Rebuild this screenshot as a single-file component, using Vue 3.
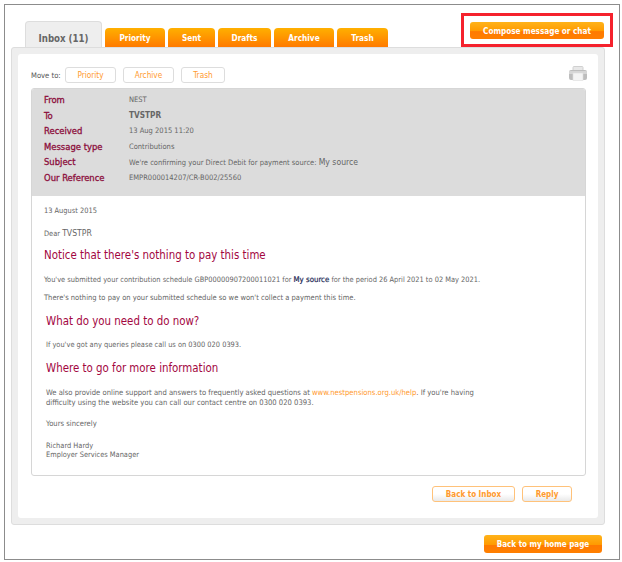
<script setup>
const tabs = ['Priority', 'Sent', 'Drafts', 'Archive', 'Trash']
const moves = ['Priority', 'Archive', 'Trash']
const meta = [
  { label: 'From', value: 'NEST' },
  { label: 'To', value: 'TVSTPR', big: true },
  { label: 'Received', value: '13 Aug 2015 11:20' },
  { label: 'Message type', value: 'Contributions' },
  { label: 'Subject', value: "We're confirming your Direct Debit for payment source: ", extra: 'My source' },
  { label: 'Our Reference', value: 'EMPR000014207/CR-B002/25560' }
]
</script>

<template>
  <div class="frame">
    <div class="top">
      <nav class="tabs">
        <div class="tab active">Inbox (11)</div>
        <div v-for="t in tabs" :key="t" class="tab" :class="'t-' + t.toLowerCase()">{{ t }}</div>
      </nav>
      <div class="highlight">
        <button class="solid compose">Compose message or chat</button>
      </div>
    </div>

    <section class="panel">
      <div class="card">
        <div class="toolbar">
          <span class="move-label">Move to:</span>
          <button v-for="m in moves" :key="m" class="move" :class="'m-' + m.toLowerCase()">{{ m }}</button>
          <svg class="printer" width="18" height="15" viewBox="0 0 18 15">
            <rect x="4" y="0.5" width="10" height="5" rx="1" fill="#e8e8e8" stroke="#d0d0d0" />
            <path d="M2 4h14a2 2 0 0 1 2 2v6a2 2 0 0 1-2 2H2a2 2 0 0 1-2-2V6a2 2 0 0 1 2-2z" fill="#bdbdbd" />
            <rect x="0" y="5" width="18" height="3" fill="#d6d6d6" />
            <rect x="4" y="7" width="10" height="7.5" fill="#f4f4f4" stroke="#dcdcdc" stroke-width="0.6" />
          </svg>
        </div>

        <article class="message">
          <header class="meta">
            <div v-for="r in meta" :key="r.label" class="meta-row">
              <span class="meta-label">{{ r.label }}</span>
              <span class="meta-value" :class="{ big: r.big }">{{ r.value }}<span v-if="r.extra" class="extra">{{ r.extra }}</span></span>
            </div>
          </header>
          <div class="body">
            <p class="date">13 August 2015</p>
            <p class="dear">Dear <span class="dear-name">TVSTPR</span></p>
            <h2 class="h1">Notice that there's nothing to pay this time</h2>
            <p class="p1">You've submitted your contribution schedule GBP00000907200011021 for <b>My source</b> for the period 26 April 2021 to 02 May 2021.</p>
            <p class="p2">There's nothing to pay on your submitted schedule so we won't collect a payment this time.</p>
            <div class="indent">
              <h2 class="h2">What do you need to do now?</h2>
              <p class="p3">If you've got any queries please call us on 0300 020 0393.</p>
              <h2 class="h3">Where to go for more information</h2>
              <p class="p4">We also provide online support and answers to frequently asked questions at <a>www.nestpensions.org.uk/help</a>. If you're having<br />difficulty using the website you can call our contact centre on 0300 020 0393.</p>
              <p class="p5">Yours sincerely</p>
              <p class="p6">Richard Hardy<br />Employer Services Manager</p>
            </div>
          </div>
        </article>

        <div class="actions">
          <button class="outline inbox">Back to Inbox</button>
          <button class="outline reply">Reply</button>
        </div>
      </div>
    </section>

    <div class="bottom">
      <button class="solid home">Back to my home page</button>
    </div>
  </div>
</template>

<style>
html, body { margin: 0; background: #fff; }
</style>

<style scoped>
* { box-sizing: border-box; }
.frame {
  width: 616px; height: 556px; margin: 4px 0 0 4px;
  border: 1px solid #8c8c8c; background: #fff;
  padding: 8px 0 0 6px;
  font-family: "DejaVu Sans Condensed", "DejaVu Sans", sans-serif;
  color: #666; font-size: 7.4px;
}
.top { display: flex; justify-content: space-between; height: 34px; width: 602px; }
.tabs { display: flex; align-items: flex-end; gap: 3px; padding-left: 14px; height: 34px; }
.tab {
  width: 60px; height: 19px; border-radius: 4px 4px 0 0;
  background: linear-gradient(#ffb000, #ff7a00);
  color: #fff; font-weight: bold; font-size: 8.2px; text-align: center; line-height: 21px;
}
.t-sent { width: 47px; }
.t-drafts { width: 53px; }
.t-archive { width: 60px; }
.t-trash { width: 51px; }
.tab.active {
  width: 77px; height: 26px; background: #eee; border: 1px solid #ddd; border-bottom: 0;
  color: #666; font-size: 9.6px; line-height: 34px;
}
.highlight { width: 152px; height: 34px; border: 3px solid #f5222d; padding: 6px; }
.solid {
  display: block; border: 0; padding: 0; border-radius: 3px; color: #fff; font: inherit; font-weight: bold;
  background: linear-gradient(#ffb31a 0%, #ff9a00 55%, #ff7a00 56%, #ff7f00 100%);
}
.compose { width: 134px; height: 17px; font-size: 8.1px; }
.panel {
  width: 594px; height: 478px; padding: 6px;
  background: #eee; border: 1px solid #ddd; border-radius: 3px;
}
.card { height: 464px; background: #fff; border-radius: 3px; padding: 0 11px 0 13px; }
.toolbar { display: flex; align-items: center; height: 34px; padding-top: 8px; }
.move-label { width: 34px; font-size: 7.6px; color: #555; }
.move {
  height: 16px; width: 51px; margin-right: 7px; padding: 0;
  border: 1px solid #ddd; border-radius: 3px; background: #fff; color: #ff9a2e; font: inherit; font-size: 8.2px;
}
.m-trash { width: 44px; }
.printer { margin-left: auto; margin-top: -4px; }
.message { width: 555px; height: 388px; border: 1px solid #d6d6d6; border-radius: 3px; }
.meta { height: 107px; background: #dcdcdc; padding: 3px 0 0 12px; border-radius: 2px 2px 0 0; }
.meta-row { display: flex; height: 15.5px; align-items: center; }
.meta-label { width: 85px; color: #8c0f3c; font-size: 9.4px; -webkit-text-stroke: 0.3px #8c0f3c; }
.meta-value { font-size: 7.5px; color: #666; }
.meta-value.big { font-size: 8.2px; font-weight: bold; }
.extra { font-size: 8.6px; }
.body { padding: 0 12px; line-height: 10px; }
p { margin: 0; }
h2 { margin: 0; color: #a3073f; font-weight: 400; font-size: 11.4px; line-height: 16px; }
.date { padding-top: 10px; }
.dear { padding-top: 12px; }
.dear-name { font-size: 8.6px; }
.h1 { margin-top: 8px; }
.p1 { margin-top: 12px; }
.p1 b { color: #222a55; font-weight: 400; -webkit-text-stroke: 0.2px #222a55; font-size: 7.8px; }
.p2 { margin-top: 8px; font-size: 7.5px; }
.indent { padding-left: 2px; }
.h2 { margin-top: 10px; }
.p3 { margin-top: 11px; }
.h3 { margin-top: 10px; }
.p4 { margin-top: 12px; line-height: 9.5px; font-size: 7.6px; }
.p4 a { color: #ff9a2e; }
.p5 { margin-top: 12px; font-size: 7.6px; }
.p6 { margin-top: 12px; line-height: 9px; }
.actions { display: flex; justify-content: flex-end; gap: 7px; padding: 10px 15px 0 0; }
.outline {
  height: 16px; padding: 0; border: 1px solid #ffc27a; border-radius: 3px;
  background: linear-gradient(#fff 50%, #e9e9e9); color: #ff9a2e; font: inherit; font-weight: bold; font-size: 8px;
}
.inbox { width: 83px; }
.reply { width: 50px; }
.bottom { display: flex; justify-content: flex-end; width: 591px; padding-top: 10px; }
.home { width: 118px; height: 18px; font-size: 8px; }
</style>
